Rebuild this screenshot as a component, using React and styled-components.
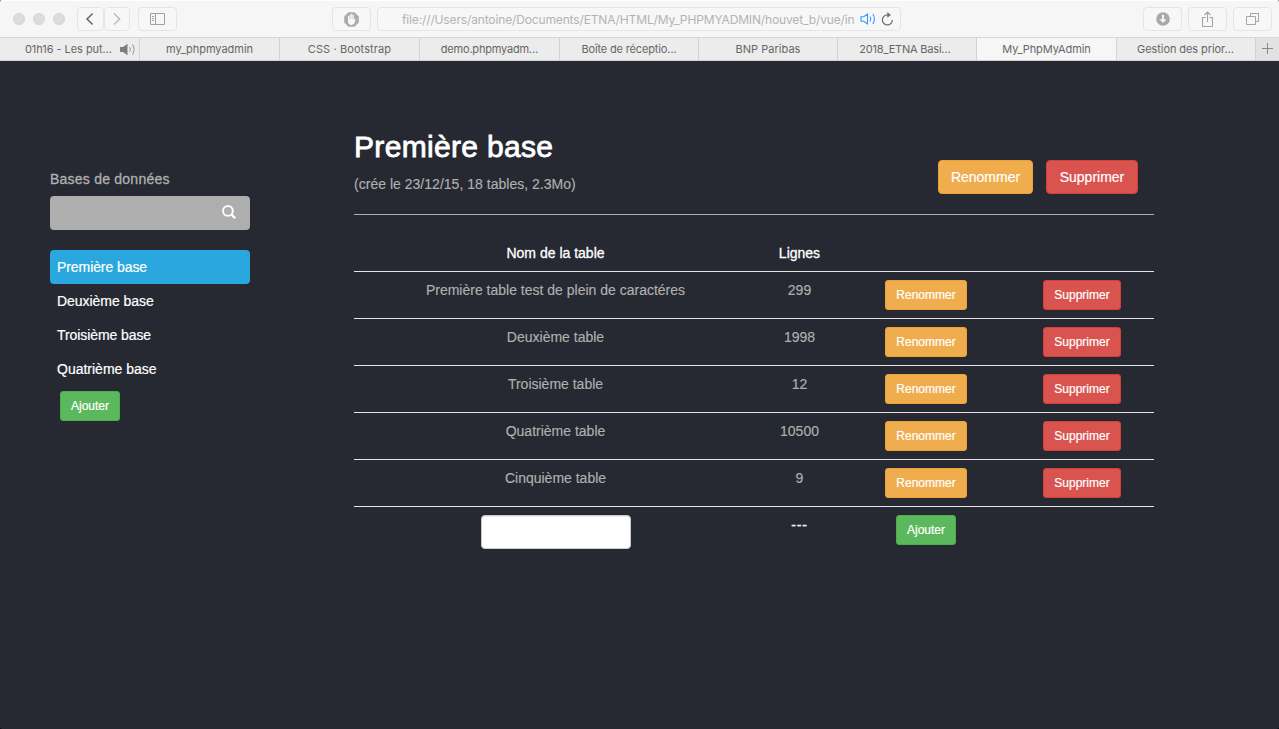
import React from "react";
import styled, { createGlobalStyle, css } from "styled-components";

const GlobalStyle = createGlobalStyle`
  * { box-sizing: border-box; }
  body {
    margin: 0;
    background: #000;
    font-family: "Liberation Sans", Arial, sans-serif;
    font-size: 14px;
    line-height: 20px;
    color: #b0b0b0;
  }
`;

const Window = styled.div`
  display: flex;
  flex-direction: column;
  height: 729px;
  overflow: hidden;
  border-radius: 2px;
  background: #262931;
`;

/* Browser chrome */
const Toolbar = styled.header`
  display: flex;
  align-items: center;
  height: 38px;
  padding: 0 7px 0 13px;
  background: #f6f6f6;
  border-top: 1px solid #fff;
  border-bottom: 1px solid #d6d6d6;
  font-family: Inter, sans-serif;
`;

const Lights = styled.div`
  display: flex;
  gap: 8px;
`;

const Light = styled.i`
  width: 12px;
  height: 12px;
  border-radius: 50%;
  background: #dcdcdc;
  border: 1px solid #d5d5d5;
`;

const ToolButton = styled.button`
  display: flex;
  align-items: center;
  justify-content: center;
  width: ${(p) => p.$width || 39}px;
  height: 24px;
  margin: 0 0 0 ${(p) => p.$gap || 0}px;
  padding: 0 ${(p) => p.$nudge || 0}px 0 0;
  border: 1px solid #e5e5e5;
  border-radius: 4px;
  background: #f7f7f7;
`;

const Address = styled.div`
  display: flex;
  align-items: center;
  width: 524px;
  height: 24px;
  margin-left: 6px;
  padding: 0 4px 0 24px;
  border: 1px solid #e5e5e5;
  border-radius: 4px;
  background: #f7f7f7;
`;

const Url = styled.span`
  flex: none;
  width: 453px;
  padding-top: 2px;
  white-space: nowrap;
  font-size: 12px;
  letter-spacing: -0.14px;
  color: #b3b3b3;
`;

const AddressIcons = styled.span`
  display: flex;
  flex: none;
  align-items: center;
  gap: 4px;
  margin-left: 5px;
`;

const Actions = styled.div`
  display: flex;
  gap: 6px;
  margin-left: auto;
`;

const TabBar = styled.nav`
  display: grid;
  grid-template-columns: 140px 140px 140px 140px 139px 139px 139px 140px 139px 1fr;
  height: 23px;
  background: #ececec;
  border-bottom: 1px solid #d2d2d2;
  font-family: Inter, sans-serif;
`;

const Tab = styled.a`
  position: relative;
  display: flex;
  align-items: center;
  justify-content: center;
  padding-right: ${(p) => p.$nudge || 0}px;
  border-right: 1px solid #d2d2d2;
  background: ${(p) => (p.$active ? "#f6f6f6" : "#ececec")};
  color: #666;
  font-size: 11px;
  letter-spacing: ${(p) => p.$tracking || 0}px;
  white-space: nowrap;

  svg { position: absolute; right: 3px; top: 5px; }
`;

const NewTab = styled.button`
  display: flex;
  align-items: center;
  justify-content: center;
  padding: 0 1px 1px 0;
  border: 0;
  background: #e2e2e2;
`;

/* Page */
const Page = styled.main`
  display: flex;
  align-items: flex-start;
`;

const Sidebar = styled.aside`
  width: 200px;
  margin: 108px 0 0 50px;
`;

const medium = css`
  -webkit-text-stroke: ${(p) => p.$stroke || 0.3}px currentColor;
`;

const SidebarLabel = styled.label`
  display: block;
  margin-bottom: 7px;
  letter-spacing: 0.23px;
  ${medium}
`;

const Search = styled.div`
  display: flex;
  align-items: center;
  justify-content: flex-end;
  height: 34px;
  padding: 0 14px 2px;
  border-radius: 4px;
  background: #aeaeae;
`;

const BaseList = styled.ul`
  margin: 20px 0 5px;
  padding: 0;
  list-style: none;
`;

const BaseItem = styled.li`
  height: 34px;
  padding: 7px;
  border-radius: 4px;
  letter-spacing: ${(p) => p.$tracking || 0}px;
  color: #fff;
  background: ${(p) => (p.$active ? "#29a7de" : "transparent")};
  -webkit-text-stroke: 0.2px currentColor;
`;

const tones = {
  warning: ["#f0ad4e", "#eea236"],
  danger: ["#d9534f", "#d43f3a"],
  success: ["#5cb85c", "#4cae4c"],
};

const Button = styled.button`
  display: inline-flex;
  align-items: center;
  justify-content: center;
  height: ${(p) => (p.$large ? 34 : 30)}px;
  width: ${(p) => p.$width}px;
  padding: 0;
  border: 1px solid ${(p) => tones[p.$tone][1]};
  border-radius: ${(p) => (p.$large ? 4 : 3)}px;
  background: ${(p) => tones[p.$tone][0]};
  color: #fff;
  font: ${(p) => (p.$large ? "14px/20px" : "12px/18px")} "Liberation Sans", Arial, sans-serif;
  -webkit-text-stroke: 0.2px currentColor;
`;

const SidebarAction = styled.div`
  display: flex;
  padding-left: 10px;
`;

const Content = styled.section`
  width: 800px;
  margin: 69px 0 0 104px;
`;

const Heading = styled.div`
  display: flex;
  justify-content: space-between;
  height: 85px;
  padding-right: 16px;
  border-bottom: 1px solid #aeaeae;
  margin-bottom: 20px;
`;

const Title = styled.h2`
  margin: 0 0 11px;
  font-size: 30px;
  line-height: 33px;
  font-weight: 400;
  letter-spacing: 0.33px;
  color: #fff;
  -webkit-text-stroke: 0.8px currentColor;
`;

const Subtitle = styled.p`
  margin: 0;
  letter-spacing: 0.02px;
  -webkit-text-stroke: 0.15px currentColor;
`;

const HeadingActions = styled.div`
  display: flex;
  gap: 13px;
  padding-top: 30px;
`;

const Table = styled.table`
  width: 800px;
  table-layout: fixed;
  border-collapse: separate;
  border-spacing: 0;
  text-align: center;
  -webkit-text-stroke: 0.15px currentColor;
`;

const Column = styled.col`
  width: ${(p) => p.$width}px;
`;

const HeadCell = styled.th`
  height: 36px;
  padding: 8px;
  font-weight: 400;
  color: #fff;
  -webkit-text-stroke: 0.3px currentColor;
`;

const Cell = styled.td`
  height: 47px;
  padding: 8px;
  vertical-align: top;
  border-top: 1px solid #e4e4e4;
`;

const NameInput = styled.input`
  display: block;
  width: 150px;
  height: 34px;
  margin: 0 auto;
  padding: 6px 12px;
  border: 1px solid #ccc;
  border-radius: 4px;
  background: #fff;
  box-shadow: inset 0 1px 1px rgba(0, 0, 0, 0.075);
`;

const Dashes = styled.span`
  color: #eee;
  letter-spacing: 0.8px;
  -webkit-text-stroke: 0.4px currentColor;
`;

const Chevron = ({ right }) => (
  <svg width="10" height="14" viewBox="0 0 10 14" fill="none" stroke={right ? "#bcbcbc" : "#666"} strokeWidth="1.5">
    <path d={right ? "M2 1.5 7.7 7 2 12.5" : "M7.7 1.5 2 7l5.7 5.5"} />
  </svg>
);

const PanelIcon = () => (
  <svg width="16" height="14" viewBox="0 0 16 14" fill="none" stroke="#a2a2a2">
    <path d="M.5 1.5h14v11H.5zM5.5 1.5v11M2 4.5h2M2 6.5h2M2 8.5h2" />
  </svg>
);

const HandIcon = () => (
  <svg width="15" height="15" viewBox="0 0 15 15">
    <path fill="#aaa" d="M4.5.2h6l4.3 4.3v6l-4.3 4.3h-6L.2 10.500v-6z" />
    <path
      fill="#f7f7f7"
      d="M4 4.100q.6-.6 1.100 0V7h.4V2.800q.6-.7 1.200 0V6.600h.4V2q.7-.6 1.300 0v4.600h.4V3q.6-.6 1.100 0v5.200l.8-1.200q.8-.6 1.100.1l-1.200 4q-.8 1.800-3.100 1.800Q4 12.800 4 9.500z"
    />
  </svg>
);

const SpeakerOutline = () => (
  <svg width="17" height="14" viewBox="0 0 17 14" fill="none" stroke="#3b99fc" strokeWidth="1.1">
    <path d="M1 4.800h2.800L7.500 2v10L3.800 9.200H1zM10 4.500q1.600 2.500 0 5M12.800 2q3.300 5 0 10" />
  </svg>
);

const SpeakerSolid = () => (
  <svg width="17" height="13" viewBox="0 0 17 13">
    <path fill="#7d7d7d" d="M1 4h3l4.500-3.300v11.600L4 9H1z" />
    <path fill="none" stroke="#969696" d="M10.700 4.200q1.500 2.300 0 4.600M13.500 1.500q3.200 5 0 10" />
  </svg>
);

const ReloadIcon = () => (
  <svg width="13" height="14" viewBox="0 0 13 14">
    <path fill="none" stroke="#717171" strokeWidth="1.300" d="M7.500 2.900H6.300A5 5 0 1 0 11.400 8" />
    <path fill="#717171" d="M6.300 0 10 2.900 6.300 5.800z" />
  </svg>
);

const DownloadIcon = () => (
  <svg width="14" height="14" viewBox="0 0 14 14">
    <circle cx="7" cy="7" r="6.800" fill="#a9a9a9" />
    <path fill="#f7f7f7" d="M6 2.800h2v4.400h2.600L7 11 3.400 7.200H6z" />
  </svg>
);

const ShareIcon = () => (
  <svg width="14" height="17" viewBox="0 0 14 17" fill="none" stroke="#a5a5a5" strokeWidth="1.100">
    <path d="M4.500 6.500h-3v9h10v-9h-3M6.500 11V1.200M3.500 4l3-3 3 3" />
  </svg>
);

const TabsIcon = () => (
  <svg width="14" height="14" viewBox="0 0 14 14" fill="none" stroke="#a5a5a5">
    <path d="M.5 4.500h9v8h-9zM4.500 4.500v-3h8v8h-3" />
  </svg>
);

const PlusIcon = () => (
  <svg width="13" height="13" viewBox="0 0 13 13" stroke="#888">
    <path d="M1 6.500h11M6.500 1v11" />
  </svg>
);

const SearchIcon = () => (
  <svg width="14" height="14" viewBox="0 0 14 14" fill="none" stroke="#fff">
    <circle cx="5.900" cy="5.900" r="4.900" strokeWidth="2" />
    <path d="m9.300 9.300 3.800 3.800" strokeWidth="2.500" />
  </svg>
);

const tabs = [
  { label: "01h16 - Les put…", tracking: -0.05, nudge: 2, audio: true },
  { label: "my_phpmyadmin", tracking: -0.03 },
  { label: "CSS · Bootstrap", tracking: 0.1 },
  { label: "demo.phpmyadm…", tracking: -0.2 },
  { label: "Boîte de réceptio…", tracking: -0.15 },
  { label: "BNP Paribas", tracking: 0.03 },
  { label: "2018_ETNA Basi…", tracking: -0.2, nudge: 4 },
  { label: "My_PhpMyAdmin", tracking: -0.08 },
  { label: "Gestion des prior…", tracking: -0.08, nudge: 1 },
];

const activeTab = "My_PhpMyAdmin";

const bases = [
  { name: "Première base", tracking: -0.08 },
  { name: "Deuxième base", tracking: -0.04 },
  { name: "Troisième base", tracking: -0.08 },
  { name: "Quatrième base", tracking: 0 },
];

const rows = [
  ["Première table test de plein de caractéres", 299],
  ["Deuxième table", 1998],
  ["Troisième table", 12],
  ["Quatrième table", 10500],
  ["Cinquième table", 9],
];

export default function App() {
  return (
    <Window>
      <GlobalStyle />
      <Toolbar>
        <Lights><Light /><Light /><Light /></Lights>
        <ToolButton $width={27} $gap={12} $nudge={2}><Chevron /></ToolButton>
        <ToolButton $width={26}><Chevron right /></ToolButton>
        <ToolButton $gap={8}><PanelIcon /></ToolButton>
        <ToolButton $gap={155}><HandIcon /></ToolButton>
        <Address>
          <Url>file:///Users/antoine/Documents/ETNA/HTML/My_PHPMYADMIN/houvet_b/vue/in</Url>
          <AddressIcons><SpeakerOutline /><ReloadIcon /></AddressIcons>
        </Address>
        <Actions>
          <ToolButton><DownloadIcon /></ToolButton>
          <ToolButton><ShareIcon /></ToolButton>
          <ToolButton><TabsIcon /></ToolButton>
        </Actions>
      </Toolbar>
      <TabBar>
        {tabs.map((tab) => (
          <Tab key={tab.label} $active={tab.label === activeTab} $tracking={tab.tracking} $nudge={tab.nudge}>
            {tab.label}
            {tab.audio && <SpeakerSolid />}
          </Tab>
        ))}
        <NewTab><PlusIcon /></NewTab>
      </TabBar>
      <Page>
        <Sidebar>
          <SidebarLabel>Bases de données</SidebarLabel>
          <Search><SearchIcon /></Search>
          <BaseList>
            {bases.map((base, i) => (
              <BaseItem key={base.name} $active={i === 0} $tracking={base.tracking}>{base.name}</BaseItem>
            ))}
          </BaseList>
          <SidebarAction><Button $tone="success" $width={60}>Ajouter</Button></SidebarAction>
        </Sidebar>
        <Content>
          <Heading>
            <div>
              <Title>Première base</Title>
              <Subtitle>(crée le 23/12/15, 18 tables, 2.3Mo)</Subtitle>
            </div>
            <HeadingActions>
              <Button $large $tone="warning" $width={95}>Renommer</Button>
              <Button $large $tone="danger" $width={92}>Supprimer</Button>
            </HeadingActions>
          </Heading>
          <Table>
            <colgroup>
              <Column $width={403} />
              <Column $width={85} />
              <Column $width={168} />
              <Column $width={144} />
            </colgroup>
            <thead>
              <tr>
                <HeadCell>Nom de la table</HeadCell>
                <HeadCell>Lignes</HeadCell>
                <HeadCell />
                <HeadCell />
              </tr>
            </thead>
            <tbody>
              {rows.map(([name, count]) => (
                <tr key={name}>
                  <Cell>{name}</Cell>
                  <Cell>{count}</Cell>
                  <Cell><Button $tone="warning" $width={82}>Renommer</Button></Cell>
                  <Cell><Button $tone="danger" $width={78}>Supprimer</Button></Cell>
                </tr>
              ))}
              <tr>
                <Cell><NameInput aria-label="Nom de la table" /></Cell>
                <Cell><Dashes>---</Dashes></Cell>
                <Cell><Button $tone="success" $width={60}>Ajouter</Button></Cell>
                <Cell />
              </tr>
            </tbody>
          </Table>
        </Content>
      </Page>
    </Window>
  );
}
